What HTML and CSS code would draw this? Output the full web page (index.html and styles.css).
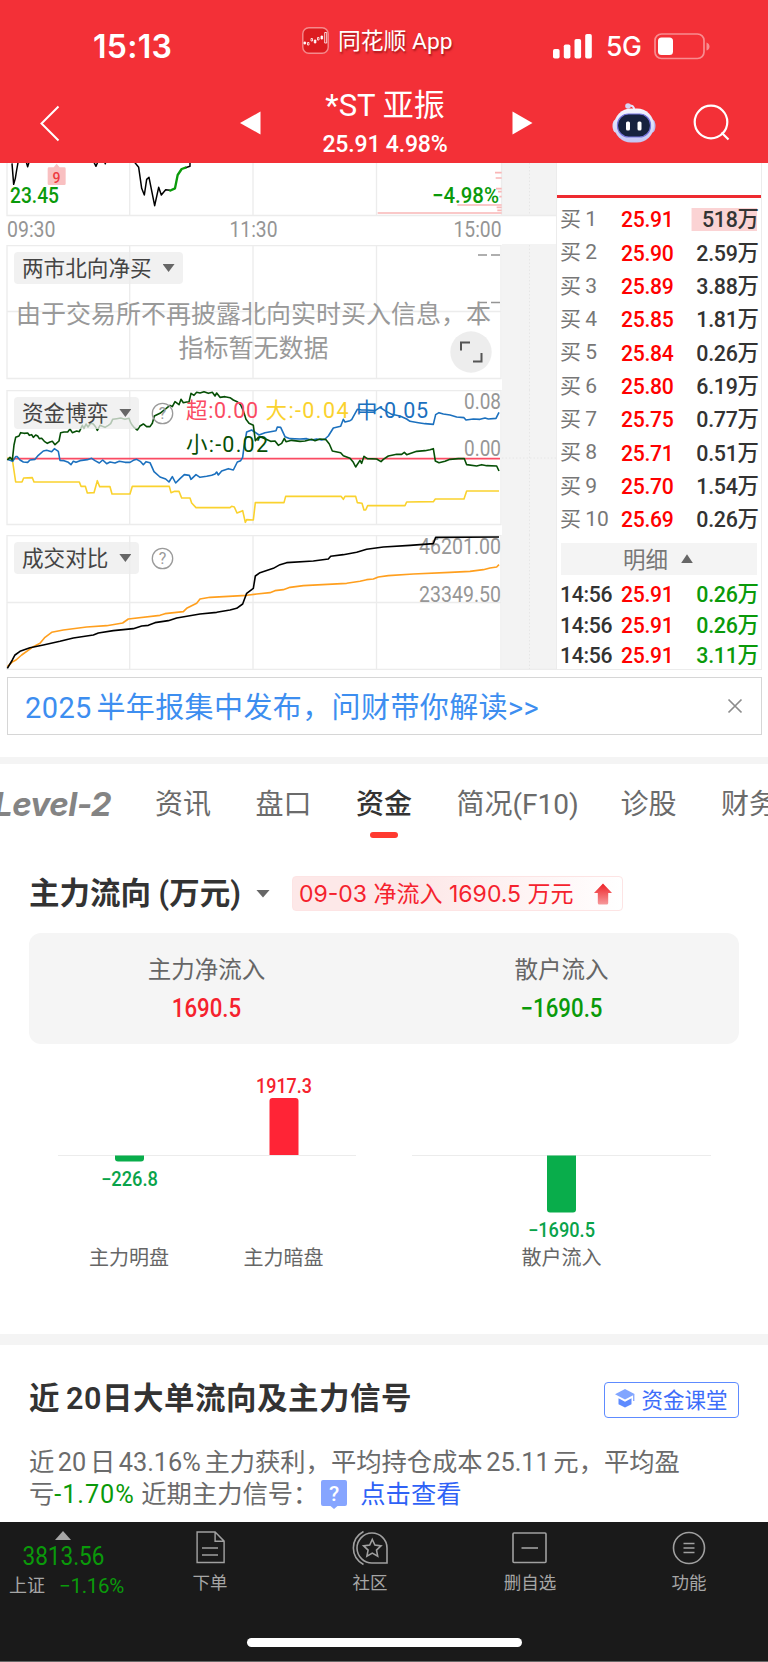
FILE: index.html
```html
<!DOCTYPE html>
<html lang="zh-CN">
<head>
<meta charset="utf-8">
<title>*ST亚振</title>
<link rel="stylesheet" href="styles.css">
</head>
<body>
<div class="app">
  <header class="header">
    <div class="status">
      <span class="clock">15:13</span>
      <span class="appname">
        <svg width="27" height="27" viewBox="0 0 27 27"><rect x=".8" y=".8" width="25.4" height="25.4" rx="6" fill="#dc1c20" stroke="#f58a8c" stroke-width="1.4"/><g fill="#fff" stroke="#fff" stroke-width=".8"><path d="M2 17h1.6v-2H2zM12.3 16h1.6v-3h-1.6zM19 12h1.6V9H19z"/><g fill="none"><path d="M5.5 18V15.500h1.500V18zM9 14v-2.500h1.500V14zM15.500 13V10.500h1.500V13zM22.700 16V5.500h2V16z"/></g></g></svg>
        <span>同花顺 App</span>
      </span>
      <svg class="signal" width="40" height="26" viewBox="0 0 40 26" fill="#fff"><rect x="0" y="16" width="6.600" height="9.500" rx="1.800"/><rect x="10.800" y="11.500" width="6.600" height="14" rx="1.800"/><rect x="21.500" y="6" width="6.600" height="19.500" rx="1.800"/><rect x="32.200" y="1" width="6.600" height="24.500" rx="1.800"/></svg>
      <span class="net">5G</span>
      <svg class="battery" width="57" height="27" viewBox="0 0 57 27"><rect x="1" y="1" width="49" height="24.500" rx="6.500" fill="none" stroke="#f88c90" stroke-width="1.700"/><rect x="4" y="4.500" width="15" height="17.500" rx="3.500" fill="#fff"/><path d="M52.500 9.500q3 1 3 4t-3 4z" fill="#f88c90"/></svg>
    </div>
    <div class="nav">
      <svg class="back" width="24" height="38" viewBox="0 0 24 38"><path d="M20.500 2.500 3.500 19.500l17 17" fill="none" stroke="#fff" stroke-width="2"/></svg>
      <svg class="prev" width="21" height="24" viewBox="0 0 21 24"><path d="M0 12 20.500.500v23z" fill="#fff"/></svg>
      <div class="title"><div class="name">*ST 亚振</div><div class="quote">25.91 4.98%</div></div>
      <svg class="next" width="21" height="24" viewBox="0 0 21 24"><path d="M20.500 12 .500.500v23z" fill="#fff"/></svg>
      <svg class="robot" width="44" height="42" viewBox="0 0 44 42"><defs><linearGradient id="shell" x2="0" y2="1"><stop stop-color="#f6f7ff"/><stop offset="1" stop-color="#c3c5f4"/></linearGradient></defs><path d="M16 3.500c4-.5 6 .5 6.500 5" fill="none" stroke="#e3e4fb" stroke-width="2"/><circle cx="16" cy="4" r="2.800" fill="#d5d6f6"/><ellipse cx="3.500" cy="24" rx="3" ry="6.500" fill="#d8daf9"/><ellipse cx="40.500" cy="24" rx="3" ry="6.500" fill="#b9bbf3"/><rect x="2" y="6.500" width="40" height="34" rx="17" fill="url(#shell)"/><rect x="5.500" y="12" width="33" height="23" rx="11" fill="#17223e" stroke="#7775dc" stroke-width="1.200"/><rect x="14" y="19.500" width="4" height="9" rx="1.500" fill="#fff"/><rect x="25.500" y="19.500" width="4" height="9" rx="1.500" fill="#fff"/></svg>
      <svg class="search" width="38" height="38" viewBox="0 0 38 38" fill="none" stroke="#fff" stroke-width="2.200"><circle cx="18" cy="18" r="16.300"/><path d="m28.500 28.500 7 7"/></svg>
    </div>
  </header>

  <section class="market">
    <div class="charts">
      <svg class="plot" width="556" height="82" viewBox="0 163 556 82">
        <path d="M502 163h54v52.500h-54zM502 244h54v1h-54z" fill="#f3f3f3"/>
        <path class="grid" d="M7 163v52.500h549M129.700 163v52.500M253 163v52.500M376.500 163v52.500M501.500 163v52.500"/>
        <path class="dots" d="M529.500 163v52.500"/>
        <g transform="translate(0 155) scale(.33333)" fill="none" stroke-width="4.500" stroke-linejoin="round">
          <path d="M36 25l5 63 5-18 4-25 4-22M79 22l4 13 4-13M282 22l6 12 5-12M314 22l3 6M404 22l12 15 9 63 8 20 7-47 7-6 17 85 12-55 8 23 13-16 13 2M556 38l14-4V22" stroke="#000"/>
          <path d="M508 108l17-8 8-40 12-18 14-5" stroke="#0a9a0a" stroke-width="7"/>
          <path d="M1485 53h20M1487 69h18M1488 101h17M1494 110h11M1498 125h7M1372 150h133M1490 157h15M1492 166h13M1133 174h372" stroke="#f9b6b6" stroke-width="5"/>
          <path d="M143 41q0-4 4-4h14l9-11 9 11h14q4 0 4 4v45q0 4-4 4h-46q-4 0-4-4z" fill="#f9c0c1"/>
        </g>
        <text class="badge" x="56.500" y="182.500" text-anchor="middle">9</text>
        <g class="num med" fill="#0a9a0a"><text x="10" y="202.500" textLength="49" lengthAdjust="spacingAndGlyphs">23.45</text><text x="432" y="202.500" textLength="67" lengthAdjust="spacingAndGlyphs">−4.98%</text></g>
        <g class="num" fill="#959595"><text x="7" y="237" textLength="48.500" lengthAdjust="spacingAndGlyphs">09:30</text><text x="229.500" y="237" textLength="48" lengthAdjust="spacingAndGlyphs">11:30</text><text x="453.500" y="237" textLength="48" lengthAdjust="spacingAndGlyphs">15:00</text></g>
      </svg>

      <div class="panel">
        <svg class="plot" width="556" height="145" viewBox="0 245 556 145">
          <path d="M502 245h54v145h-54z" fill="#f3f3f3"/>
          <path class="grid" d="M7 245.500h494v133H7zM129.700 245v133.500M253 245v133.500M376.500 245v133.500M7 311.500h494"/>
          <path class="dots" d="M529.500 245v145"/>
          <path d="M478 255h9m4 0h9M478 302.500h9m4 0h9" stroke="#959595" stroke-width="1.700"/>
        </svg>
        <button class="chip">两市北向净买<i class="caret"></i></button>
        <p class="notice">由于交易所不再披露北向实时买入信息，本<br>指标暂无数据</p>
        <svg class="expand" width="42" height="42" viewBox="0 0 42 42"><circle cx="21" cy="21" r="20.700" fill="#ededed"/><path d="M11 19.500V11.500h9M23 30.500h8.500V22" fill="none" stroke="#555" stroke-width="2"/></svg>
      </div>

      <div class="panel">
        <svg class="plot" width="556" height="145" viewBox="0 390 556 145">
          <path d="M502 390h54v145h-54z" fill="#f3f3f3"/>
          <path class="grid" d="M7 390.500h494v134H7zM129.700 390v134.500M253 390v134.500M376.500 390v134.500"/>
          <path class="dots" d="M529.500 390v145M502 458h54"/>
          <g class="axis"><text x="464" y="408.500" textLength="37" lengthAdjust="spacingAndGlyphs">0.08</text><text x="464" y="456" textLength="37" lengthAdjust="spacingAndGlyphs">0.00</text></g>
          <g class="line" transform="translate(0 380) scale(.33333)">
            <path d="M22 236H1500" stroke="#fa4b63" stroke-width="5"/>
            <path stroke="#fad22e" d="M22 234L37 238 47 306 66 306 71 294 97 293 102 306 238 306 243 319 256 319 262 339 282 338 292 302 299 320 330 320 336 342 390 342 397 319 508 319 513 338 524 334 537 334 545 354 570 354 575 369 588 383 690 383 695 379 703 381 711 399 728 392 736 427 740 419 760 420 766 368 852 368 857 349 1023 349 1030 358 1035 349 1067 349 1072 368 1086 370 1092 390 1097 390 1103 377 1215 377 1220 366 1300 365 1306 357 1392 357 1400 333 1497 333"/>
            <path stroke="#1b70be" d="M22 238L38 244 47 230 52 230 60 240 70 246 83 247 90 240 105 238 115 226 130 213 140 211 155 215 163 206 175 214 180 241 192 242 205 247 213 254 220 244 228 247 240 242 262 239 275 235 285 242 298 249 308 240 320 251 330 246 345 249 358 244 375 247 390 247 400 241 410 238 422 245 430 254 438 245 450 248 462 275 480 291 497 297 507 306 517 290 527 309 540 296 553 284 568 286 573 298 588 284 600 292 620 289 635 286 645 282 650 276 655 285 665 273 685 266 700 270 712 246 722 242 728 232 732 200 740 156 755 150 777 165 795 158 828 152 832 141 842 142 855 170 870 176 900 177 920 176 935 180 950 177 965 180 975 177 985 168 1000 144 1022 139 1030 118 1035 126 1050 122 1055 119 1072 88 1085 90 1100 90 1125 92 1140 82 1155 92 1175 103 1200 108 1220 117 1230 124 1255 128 1275 131 1300 133 1307 104 1317 98 1330 102 1350 105 1370 111 1392 113 1398 120 1420 117 1440 118 1455 114 1465 117 1488 115 1497 97"/>
            <path stroke="#064f06" d="M22 240L30 232 37 240 42 195 47 172 57 168 62 158 72 160 83 159 88 166 95 164 100 172 107 165 113 168 118 176 125 175 133 184 142 190 150 186 157 184 165 194 177 183 182 158 192 156 203 156 210 147 217 158 230 153 238 155 247 136 252 145 258 132 264 141 272 130 280 132 287 141 292 151 300 136 307 139 315 142 325 136 332 131 338 118 350 116 362 114 375 118 387 115 392 128 397 136 403 143 412 150 420 138 430 132 440 140 450 140 457 130 463 108 480 100 495 88 510 76 517 80 525 65 537 74 543 58 550 68 560 66 567 66 573 40 582 46 590 37 600 39 612 35 625 40 637 37 645 48 650 39 660 52 675 50 690 53 700 60 713 66 722 75 730 92 738 118 747 130 760 136 766 182 775 172 780 170 795 176 812 184 825 183 835 196 845 190 853 175 858 185 875 181 900 184 915 183 935 178 945 182 960 177 978 179 988 192 997 213 1022 218 1030 227 1050 235 1060 247 1067 261 1080 241 1085 250 1092 229 1102 236 1130 237 1143 245 1150 238 1165 228 1190 223 1205 223 1213 217 1220 224 1235 219 1250 214 1275 212 1290 209 1300 206 1306 243 1317 248 1335 244 1350 238 1375 236 1393 236 1400 254 1430 258 1445 254 1460 257 1490 258 1497 273"/>
          </g>
          <g class="legend"><text x="186" y="417.500" textLength="72" fill="#fa4b63">超:0.00</text><text x="265.500" y="417.500" textLength="83" fill="#fad22e">大:-0.04</text><text x="356" y="417.500" textLength="72" fill="#1b70be">中:0.05</text><text x="186" y="451.500" textLength="82" fill="#064f06">小:-0.02</text></g>
        </svg>
        <div class="tools"><button class="chip">资金博弈<i class="caret"></i></button><svg class="help" width="23" height="23" viewBox="0 0 23 23"><circle cx="11.500" cy="11.500" r="10.200" fill="none" stroke="#9a9a9a" stroke-width="1.300"/><text x="11.500" y="17.300" text-anchor="middle">?</text></svg></div>
      </div>

      <div class="panel last">
        <svg class="plot" width="556" height="135" viewBox="0 535 556 135">
          <path d="M502 535h54v134.500h-54z" fill="#f3f3f3"/>
          <path class="grid" d="M7 535.500h494v134H7zM129.700 535v134.500M253 535v134.500M376.500 535v134.500M7 602.500h494M501 669.500h55"/>
          <path class="dots" d="M529.500 535v134"/>
          <g class="axis"><text x="419" y="554" textLength="82" lengthAdjust="spacingAndGlyphs">46201.00</text><text x="419" y="601.500" textLength="82" lengthAdjust="spacingAndGlyphs">23349.50</text></g>
          <g class="line" transform="translate(0 380) scale(.33333)">
            <path stroke="#ff9f1e" d="M22 860L38 845 48 840 65 825 100 800 120 790 135 772 155 757 190 750 260 741 320 737 368 729 385 717 480 706 495 701 550 695 560 685 590 670 600 657 630 652 740 646 770 642 810 638 825 632 850 629 870 622 910 617 1040 610 1080 604 1100 599 1120 597 1135 591 1165 587 1240 582 1350 577 1410 574 1450 569 1470 564 1490 561 1497 554"/>
            <path stroke="#000" d="M22 865L37 840 45 825 60 814 90 803 130 795 180 784 220 774 280 765 295 759 340 752 400 746 425 738 445 736 465 728 505 722 530 714 600 702 650 697 690 690 710 685 728 672 740 640 760 625 766 588 780 578 820 565 840 554 860 548 940 543 985 537 992 529 1030 524 1070 517 1100 508 1150 501 1230 496 1300 491 1307 472 1497 471"/>
          </g>
        </svg>
        <div class="tools"><button class="chip">成交对比<i class="caret"></i></button><svg class="help" width="23" height="23" viewBox="0 0 23 23"><circle cx="11.500" cy="11.500" r="10.200" fill="none" stroke="#9a9a9a" stroke-width="1.300"/><text x="11.500" y="17.300" text-anchor="middle">?</text></svg></div>
      </div>
    </div>

    <aside class="book">
      <div class="book-head"></div>
      <div class="bids">
        <div class="row"><span>买 1</span><b>25.91</b><em class="hot">518万</em></div>
        <div class="row"><span>买 2</span><b>25.90</b><em>2.59万</em></div>
        <div class="row"><span>买 3</span><b>25.89</b><em>3.88万</em></div>
        <div class="row"><span>买 4</span><b>25.85</b><em>1.81万</em></div>
        <div class="row"><span>买 5</span><b>25.84</b><em>0.26万</em></div>
        <div class="row"><span>买 6</span><b>25.80</b><em>6.19万</em></div>
        <div class="row"><span>买 7</span><b>25.75</b><em>0.77万</em></div>
        <div class="row"><span>买 8</span><b>25.71</b><em>0.51万</em></div>
        <div class="row"><span>买 9</span><b>25.70</b><em>1.54万</em></div>
        <div class="row"><span>买 10</span><b>25.69</b><em>0.26万</em></div>
      </div>
      <div class="detail">明细<i class="caret up"></i></div>
      <div class="deals">
        <div class="row"><time>14:56</time><b>25.91</b><em>0.26万</em></div>
        <div class="row"><time>14:56</time><b>25.91</b><em>0.26万</em></div>
        <div class="row"><time>14:56</time><b>25.91</b><em>3.11万</em></div>
      </div>
    </aside>
  </section>

  <div class="banner"><span>2025 半年报集中发布，问财带你解读&gt;&gt;</span><svg width="16" height="16" viewBox="0 0 16 16"><path d="m1.500 1.500 13 13m0-13-13 13" stroke="#8c8c8c" stroke-width="1.700"/></svg></div>
  <div class="divider"></div>

  <nav class="tabs">
    <span class="level">Level-2</span><span>资讯</span><span>盘口</span><span class="active">资金</span><span class="wide">简况(F10)</span><span>诊股</span><span>财务</span>
  </nav>

  <section class="flow">
    <div class="flow-head">
      <h2>主力流向 (万元)</h2><i class="caret"></i>
      <div class="tag"><span>09-03 净流入 1690.5 万元</span><svg width="18" height="22" viewBox="0 0 18 22"><defs><linearGradient id="rise" x2="0" y2="1"><stop stop-color="#ee2025"/><stop offset="1" stop-color="#f69a9c"/></linearGradient></defs><path d="M9 0.500 18 10h-3.800v10q0 1.500-1.500 1.500H5.300q-1.500 0-1.500-1.500V10H0z" fill="url(#rise)"/></svg></div>
    </div>
    <div class="card">
      <div><p>主力净流入</p><strong class="up-c">1690.5</strong></div>
      <div><p>散户流入</p><strong class="down-c">−1690.5</strong></div>
    </div>
    <svg class="bars" width="768" height="290" viewBox="0 1044 768 290">
      <path d="M58 1155.500h298M412 1155.500h299" stroke="#ececec"/>
      <path d="M115 1155.500h29v3q0 3-3 3h-23q-3 0-3-3z" fill="#09ad4b"/>
      <path d="M269.500 1155v-54q0-3 3-3h23q3 0 3 3v54z" fill="#ff2436"/>
      <path d="M547 1155.500h29v54q0 3-3 3h-23q-3 0-3-3z" fill="#09ad4b"/>
      <g class="bar-num"><text x="101" y="1186" textLength="57" lengthAdjust="spacingAndGlyphs" fill="#09a34a">−226.8</text><text x="256" y="1092.500" textLength="56" lengthAdjust="spacingAndGlyphs" fill="#f5222d">1917.3</text><text x="528" y="1236.500" textLength="67" lengthAdjust="spacingAndGlyphs" fill="#09a34a">−1690.5</text></g>
      <g class="bar-label" text-anchor="middle"><text x="129" y="1265">主力明盘</text><text x="283.500" y="1265">主力暗盘</text><text x="561.500" y="1265">散户流入</text></g>
    </svg>
  </section>
  <div class="divider second"></div>

  <section class="signals">
    <div class="sig-head"><h2>近 20日大单流向及主力信号</h2>
      <button class="course"><svg width="20" height="19" viewBox="0 0 20 19"><path d="M10 0 0 5.300l10 5.200 10-5.200z" fill="#81a5ff"/><path d="M3.500 9.200 10 12.700l6.500-3.500v6L10 18.500l-6.500-3.300z" fill="#5e8bff"/><path d="M18.800 6v6" stroke="#5e8bff"/></svg>资金课堂</button></div>
    <p class="line1">近 20 日 43.16% 主力获利，平均持仓成本 25.11 元，平均盈</p>
    <p class="line2"><span>亏</span><span class="loss">-1.70%</span><span class="recent">近期主力信号：</span><svg width="26" height="29" viewBox="0 0 26 29"><path d="M2 0h22q2 0 2 2v22q0 2-2 2h-7.500L13 29l-3.500-3H2q-2 0-2-2V2q0-2 2-2z" fill="#86a5ff"/><text x="13" y="21" text-anchor="middle">?</text></svg><a>点击查看</a></p>
  </section>

  <footer class="footer">
    <div class="index"><i class="caret up"></i><strong>3813.56</strong><div><span>上证</span><b>−1.16%</b></div></div>
    <div class="item"><svg width="38" height="36" viewBox="0 0 38 36"><path d="M4 2h20l10 9.500V33.500H4zM24 2v9.500h10" transform="translate(2.500) scale(.9 .97)"/><path d="M11 18h16M11 25h16"/></svg><span>下单</span></div>
    <div class="item"><svg width="38" height="36" viewBox="0 0 38 36"><path d="M12.500 1.500C-1 9-1 27 12.500 34.500M36 33H21.500a15 15 0 1 1 14.500-15z"/><path d="m21.300 9.500 2.600 5.600 6.100.8-4.500 4.200 1.200 6-5.400-3-5.400 3 1.200-6-4.500-4.200 6.100-.8z"/></svg><span>社区</span></div>
    <div class="item"><svg width="38" height="36" viewBox="0 0 38 36"><rect x="2" y="3" width="33" height="29.500" rx="1"/><path d="M10.500 18h16.500"/></svg><span>删自选</span></div>
    <div class="item"><svg width="38" height="36" viewBox="0 0 38 36"><circle cx="19" cy="18" r="15.500"/><path d="M13.500 13.500h11M13.500 18h11M13.500 22.500h11"/></svg><span>功能</span></div>
    <div class="home"></div>
  </footer>
</div>
</body>
</html>
```
FILE: styles.css
```css
* { box-sizing: border-box; }
body { margin: 0; background: #fff; font-family: Roboto, "Noto Sans CJK SC", sans-serif; color: #333; }
.app { width: 768px; height: 1662px; overflow: hidden; display: flex; flex-direction: column; }
svg { display: block; flex: none; }
p, h2 { margin: 0; }
i, em { font-style: normal; }
button { border: 0; font: inherit; padding: 0; color: inherit; }
span, b, strong, em, h2 { white-space: nowrap; }

.header { height: 163px; flex: none; background: #f33037; color: #fff; }
.status { height: 82px; padding-top: 4px; display: flex; align-items: center; }
.clock { width: 208px; padding-left: 93px; font: 600 32px/1 Inter, sans-serif; letter-spacing: .3px; padding-top: 7px; }
.appname { margin-left: 94px; margin-top: -6px; width: 251px; display: flex; gap: 9px; align-items: center; font-size: 22.800px; line-height: 30px; text-shadow: 1px 2px 2px rgba(90, 0, 0, .5); }
.appname span { padding-top: 3px; }
.signal { margin-top: 6px; }
.net { width: 61px; padding-left: 13px; padding-top: 7px; font: 500 26.500px/1 Inter, sans-serif; letter-spacing: -.3px; }
.battery { margin-top: 6px; }
.nav { height: 81px; display: flex; align-items: center; }
.back { margin-left: 38px; }
.prev { margin-left: 178px; }
.title { width: 251px; text-align: center; padding-right: 3px; margin-top: 1px; }
.name { font-size: 31px; line-height: 40px; }
.quote { font-size: 24px; font-weight: 500; line-height: 34px; letter-spacing: -.2px; margin-top: 1px; transform: scaleX(.96); }
.robot { margin-left: 79px; }
.search { margin-left: 37px; }

.market { height: 507px; flex: none; display: flex; }
.charts { width: 556px; flex: none; }
.grid { fill: none; stroke: #ececec; stroke-width: 1.300; }
.dots { fill: none; stroke: #e6e6e6; stroke-dasharray: 1.500 2; }
.num { font-size: 22px; }
.med { font-weight: 500; }
.badge { font-size: 14px; fill: #ee3a3f; font-weight: 500; }
.axis { font-size: 21.500px; fill: #969696; }
.legend { font-size: 21.500px; }
.line { fill: none; stroke-width: 4.800; stroke-linejoin: round; }
.panel { height: 145px; display: grid; grid-template: 1fr / 1fr; }
.panel.last { height: 135px; }
.panel > * { grid-area: 1 / 1; }
.panel > .chip, .tools { margin: 7px 0 0 14px; justify-self: start; align-self: start; }
.tools { display: flex; align-items: center; gap: 12px; }
.chip { height: 32px; padding: 0 8px 3px 8px; display: flex; align-items: center; gap: 11px; border-radius: 4px; background: rgba(236, 236, 236, .75); color: #444; font-size: 21.600px; }
.chip .caret { margin-top: 3px; }
.caret { width: 12px; height: 8px; background: #666; clip-path: polygon(0 0, 100% 0, 50% 100%); flex: none; }
.caret.up { clip-path: polygon(0 100%, 100% 100%, 50% 0); }
.help text { font-size: 16px; fill: #9a9a9a; }
.notice { margin: 52.500px 0 0 15px; width: 477px; height: 69px; font-size: 25px; line-height: 34.500px; color: #999; text-align: center; white-space: nowrap; }
.expand { margin: 86px 0 0 450px; }

.book { width: 206px; flex: none; border: solid #ececec; border-width: 0 1px 1px; }
.book-head { height: 35px; border-bottom: 3.500px solid #ee2a30; }
.bids { padding-top: 5px; }
.row { display: grid; grid-template-columns: 61px 60px 1fr; height: 33.330px; align-items: center; padding: 0 2.500px 0 3px; font-size: 22.500px; line-height: 1; letter-spacing: -.3px; }
.row span { color: #777; font-size: 21px; word-spacing: -1px; letter-spacing: 0; }
.row b { color: #f00; font-weight: 500; justify-self: start; transform: scaleX(.94); transform-origin: 0 50%; }
.row em { text-align: right; font-weight: 500; justify-self: end; transform: scaleX(.95); transform-origin: 100% 50%; }
.row em.hot { padding-left: 11px; line-height: 23px; background: linear-gradient(90deg, #fbd3d4 0 97%, transparent 97%); }
.row time { font-weight: 500; justify-self: start; transform: scaleX(.94); transform-origin: 0 50%; }
.detail { margin: 7px 4px 4px; height: 32px; background: #f4f4f4; color: #777; font-size: 22.500px; display: flex; align-items: center; justify-content: center; gap: 13px; padding: 0 2px 3px 0; }
.detail .caret { height: 9px; margin-top: 2px; }
.deals .row { height: 30.500px; }
.deals em { color: #0a9a0a; }

.banner { margin: 7px 6px 0 7px; height: 58px; flex: none; border: 1px solid #d6d6d6; display: flex; align-items: center; justify-content: space-between; padding: 0 18px 0 17px; color: #3d8ef0; font-size: 29px; letter-spacing: .4px; word-spacing: -3px; }
.banner span { padding-bottom: 3px; }
.divider { flex: none; height: 7px; margin-top: 22px; background: #f4f4f4; }
.tabs { flex: none; height: 79px; padding-top: 1px; display: flex; gap: 44px; color: #6b6b6b; font-size: 28px; line-height: 79px; margin-left: -6px; overflow: hidden; }
.tabs span { flex: none; width: 56.500px; }
.tabs .level { width: 117px; font: italic 700 33px/79px Inter, sans-serif; letter-spacing: -.5px; color: #848484; }
.tabs .wide { width: 120px; }
.tabs .active { position: relative; color: #333; font-weight: 500; }
.active::after { content: ""; position: absolute; left: 14px; top: 67px; width: 28px; height: 6px; border-radius: 3px; background: #ff3a30; }

.flow-head { display: flex; align-items: center; margin: 33px 0 0 29px; height: 35px; }
h2 { font-size: 30.500px; font-weight: 600; line-height: 40px; padding-top: 1px; }
.flow-head h2 { width: 227px; }
.flow-head .caret { width: 14px; }
.tag { margin-left: 22px; width: 331px; height: 35px; border: 1px solid #fde4e4; border-radius: 4px; background: linear-gradient(90deg, #fde8e8 0 40%, #fff); display: flex; align-items: center; padding: 0 10px 0 6px; justify-content: space-between; color: #f5222d; font-family: Inter, "Noto Sans CJK SC", sans-serif; font-size: 23px; }
.tag span { padding-bottom: 3px; }
.card { margin: 22px 29px 0; height: 111px; border-radius: 12px; background: #f5f5f5; display: flex; text-align: center; }
.card > div { flex: 1; padding-top: 20px; }
.card p { color: #666; font-size: 23.500px; line-height: 34px; }
.card strong { display: block; font-size: 25px; font-weight: 500; line-height: 34px; margin-top: 5px; transform: scaleX(.89); }
.up-c { color: #f5222d; }
.down-c { color: #0a9a0a; }
.bar-num { font-size: 19.500px; font-weight: 500; }
.bar-label { font-size: 20px; fill: #666; }
.second { height: 11px; margin-top: 0; }

.signals { flex: none; height: 177px; padding: 32px 29px 0; }
.sig-head { display: flex; justify-content: space-between; align-items: center; height: 40px; }
.sig-head h2 { letter-spacing: .5px; word-spacing: -2px; padding-top: 3px; }
.course { margin-top: 5px; width: 135px; height: 36px; border: 1.500px solid #5e8bff; border-radius: 4px; background: #fff; color: #3d6dfa; font-size: 21.500px; display: flex; align-items: center; justify-content: center; gap: 6px; padding-bottom: 2px; }
.line1, .line2 { font-size: 25.300px; line-height: 32px; color: #6b6b6b; white-space: nowrap; }
.line1 { margin-top: 29.500px; word-spacing: -2.700px; }
.line2 { display: flex; }
.loss { color: #0a9a0a; width: 87px; letter-spacing: .9px; }
.recent { width: 180px; }
.line2 svg { margin-top: 1px; }
.line2 svg text { font-size: 21px; font-weight: 500; fill: #fff; }
.line2 a { margin-left: 13px; color: #2f62f6; }

.footer { flex: none; height: 140px; background: #1a1a1a; color: #a6a6a6; display: grid; grid-template: 92px 1fr / 130px 160px 160px 160px 158px; font-size: 17.500px; border-bottom: 1px solid #666; }
.index { display: flex; flex-direction: column; align-items: center; padding-top: 9px; color: #0a9a0a; }
.index .caret { width: 16px; height: 9px; background: #a6a6a6; margin-right: 4px; }
.index strong { font-size: 25px; font-weight: 400; line-height: 34px; margin-right: 3px; transform: scaleX(.9); }
.index div { display: flex; gap: 14px; line-height: 24px; align-items: center; margin-left: 3px; }
.index span { color: #a6a6a6; font-size: 18px; }
.index b { font-size: 20.500px; font-weight: 400; letter-spacing: -.3px; }
.item { display: flex; flex-direction: column; align-items: center; padding-top: 8px; }
.item svg { fill: none; stroke: #a0a0a0; stroke-width: 1.600; }
.item span { line-height: 26px; margin-top: 4px; }
.home { grid-column: 1 / -1; justify-self: center; width: 275px; height: 9px; border-radius: 5px; background: #fff; margin-top: 24px; }
```
